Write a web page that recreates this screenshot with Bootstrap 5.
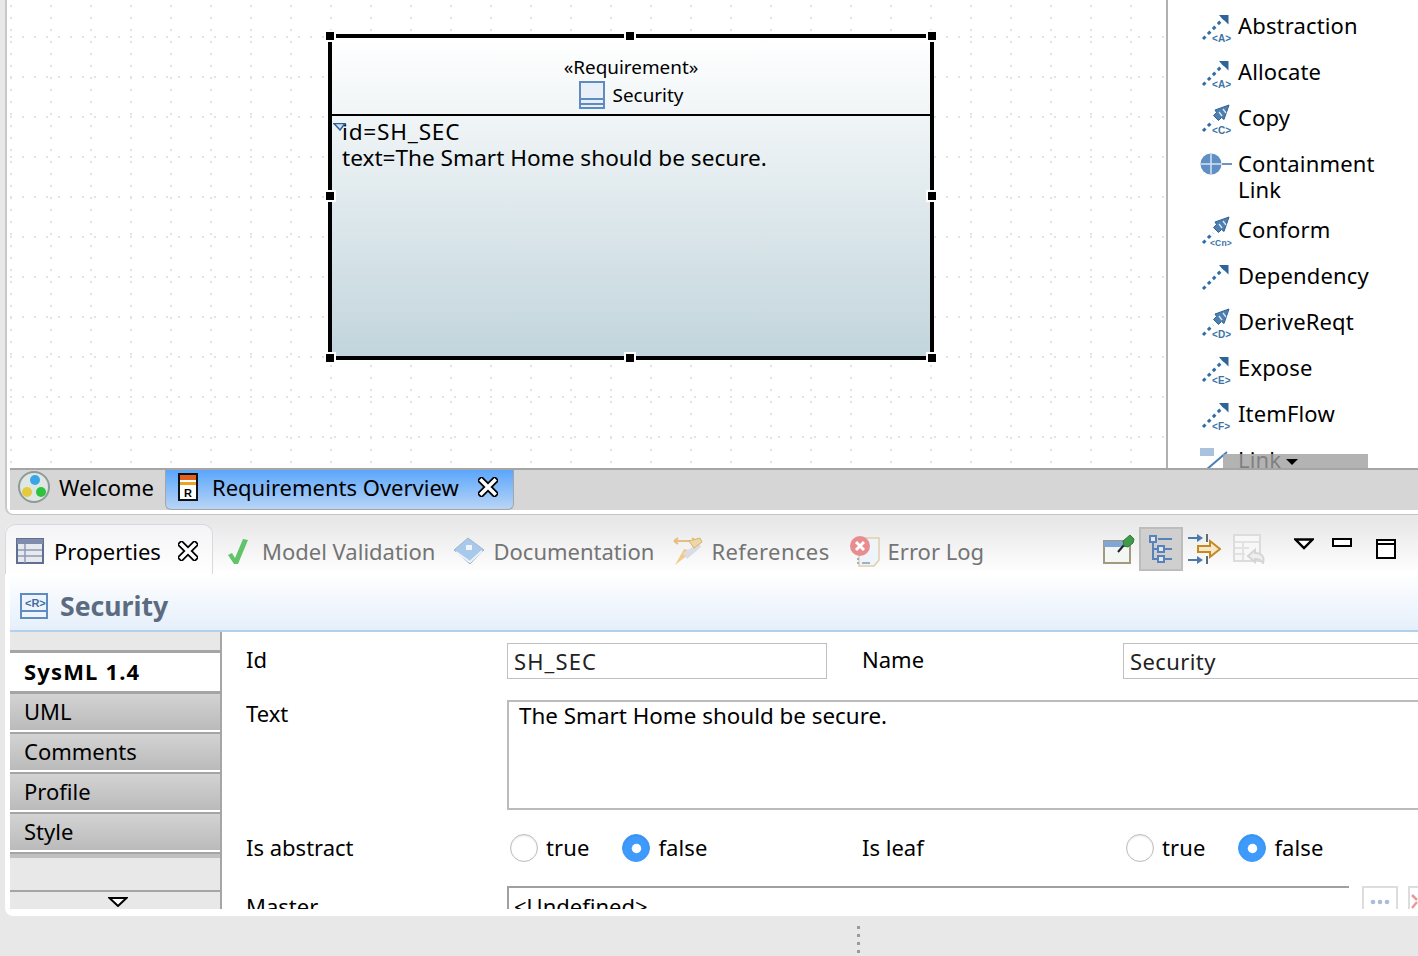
<!DOCTYPE html>
<html lang="en">
<head>
  <meta charset="UTF-8" />
  <title>Requirements Overview</title>
  <link rel="stylesheet" href="https://cdn.jsdelivr.net/npm/bootstrap@5.3.2/dist/css/bootstrap.min.css"/>
  <style>
    html, body { height: 100%; }
    body { width: 1418px; height: 956px; overflow: hidden; background: #e8e8e8; color: #000;
      font-family: "Noto Sans", "DejaVu Sans", sans-serif; font-size: 22px; line-height: 26px; }
    svg { display: block; flex: none; }
    .icon-tag { font-family: "Liberation Sans", sans-serif; font-weight: 700; font-size: 10px; fill: #3c72a8; }
    .icon-tag-sm { font-size: 8.500px; }

    /* editor area */
    .editor-wrap { height: 515px; margin-left: 5px; background: #fff; border-left: 2px solid #c8c8c8; border-bottom: 1px solid #c4c4c4; border-bottom-left-radius: 8px; padding-left: 3px; }
    .editor-top { height: 468px; }
    .diagram { width: 1156px; position: relative; background-color: #fff;
      background-image: radial-gradient(circle at 1px 1px, #e2e2e2 1px, transparent 1.3px), radial-gradient(circle at 1px 1px, #e2e2e2 1px, transparent 1.3px);
      background-size: 40px 12px, 12px 40px; background-position: 0 5px, 0 36px; }
    .palette { width: 252px; position: relative; overflow: hidden; border-left: 2px solid #b0b0b0; padding: 2px 0 0 32px; letter-spacing: .15px; }
    .pal-row { display: flex; gap: 6px; padding: 10px 0; }
    .pal-row svg { margin-top: 0; margin-bottom: -6px; overflow: visible; }
    .pal-tall { margin-bottom: -6px; }
    .pal-more { position: absolute; left: 55px; top: 454px; width: 145px; height: 14px; background: rgba(160,160,160,.8); }
    .pal-more i { position: absolute; left: 63px; top: 5px; border: 6px solid transparent; border-top: 6px solid #000; border-bottom: 0; }

    .req-node { position: absolute; left: 318px; top: 34px; width: 606px; height: 326px; border: 4px solid #000;
      background: linear-gradient(#fff, #c2d5dc); }
    .req-head { height: 78px; border-bottom: 2px solid #000; text-align: center; font-size: 18.9px; line-height: 28px; padding-top: 15px; }
    .req-name { display: flex; justify-content: center; align-items: center; gap: 8px; }
    .req-body { padding: 3px 0 0 10px; font-size: 22.6px; position: relative; }
    .req-body svg { position: absolute; left: 1px; top: 7px; }
    .wide-id { letter-spacing: .8px; }
    .handle { position: absolute; width: 12px; height: 12px; background: #000; border: 2px solid #fff; }

    .editor-tabs { height: 42px; background: #d6d6d6; border-top: 2px solid #a5a5a5; }
    .editor-tabs-fill { height: 40px; padding-bottom: 6px; }
    .welcome-tab { width: 155px; padding-left: 8px; gap: 9px; }
    .overview-tab { width: 349px; height: 40px; padding: 0 0 6px 12px; gap: 14px; background: linear-gradient(#5aa6fb, #b9d5f6); border: 1px solid #a5a5a5; border-top: 0; border-radius: 0 0 6px 6px; }
    .overview-close { margin-left: 5px; }

    /* properties */
    .props { height: 392px; margin: 9px 0 0 5px; background: #fff; border-radius: 8px 0 0 8px; overflow: hidden; }
    .props-tabs { height: 50px; background: linear-gradient(#e9e9e9, #fff); color: #747474; }
    .props-active { width: 208px; height: 50px; background: linear-gradient(#f4f4f6, #fff); border: 1px solid #d8d8e0; border-bottom: 0; border-radius: 10px 10px 0 0; color: #000; padding: 2px 0 0 10px; gap: 10px; }
    .props-close { margin-left: 7px; }
    .tab-dim { gap: 8px; padding-top: 4px; }
    .tab-check-label { margin-left: 6px; }
    .tab-refs { letter-spacing: .4px; }
    .tool-active { width: 44px; height: 44px; background: #cfcfcf; border: 2px solid #bdbdbd; }
    .props-title { height: 58px; margin-left: 5px; background: linear-gradient(#fff, #e5effb); border-bottom: 2px solid #b5d0ee; padding: 8px 0 0 10px; gap: 12px; font-size: 26.6px; font-weight: 700; color: #5b6b80; }
    .props-main { height: 277px; margin-left: 5px; overflow: hidden; }

    .side-tabs { width: 212px; flex: none; height: 277px; border-right: 2px solid #a5a5a5; background: #e8e8e8; }
    .side-blank { height: 21px; border-bottom: 3px solid #a5a5a5; }
    .side-on { height: 41px; background: #fff; border-bottom: 3px solid #a5a5a5; padding: 5px 0 0 14px; font-weight: 700; letter-spacing: 1.15px; }
    .side-off { height: 40px; padding: 0 0 0 14px; line-height: 34px; background: linear-gradient(#d3d3d3, #b9b9b9); border-bottom: 2px solid #a5a5a5; box-shadow: inset 0 -2px 0 #fff; }
    .side-gap { height: 38px; border-top: 4px solid #c0c0c0; border-bottom: 2px solid #a5a5a5; }
    .side-arrow { height: 18px; padding: 5px 0 0 6px; }

    .form-area { padding: 11px 0 0 24px; flex: none; width: 1200px; }
    .form-line { display: grid; grid-template-columns: 261px 355px 261px 1fr; align-items: center; }
    .label-up { padding-bottom: 4px; }
    .field-box { height: 36px; border: 1px solid #c0c0c0; padding: 4px 6px; color: #222; }
    .field-id { width: 320px; letter-spacing: 1.1px; }
    .field-name { letter-spacing: .4px; }
    .text-box { height: 110px; border: 2px solid #bbb; padding: 1px 10px 0; margin-top: 21px; font-size: 22.4px; }
    .text-label { padding-top: 21px; }
    .radio-line { margin-top: 24px; height: 28px; }
    .radio-group { display: flex; align-items: center; gap: 8px; padding-left: 3px; }
    .radio-group .form-check-input { width: 28px; height: 28px; margin: 0; flex: none; border-color: #bbb; box-shadow: inset 0 1px 2px rgba(0,0,0,.1); }
    .radio-group .form-check-input:checked { background-color: #3f9bfb; border-color: #3f9bfb; background-size: 72%; }
    .radio-group label { margin-right: 25px; padding-bottom: 2px; letter-spacing: .1px; }
    .label-tight { padding-bottom: 2px; }
    .master-line { margin-top: 24px; }
    .master-fields { grid-column: 2 / 5; display: flex; }
    .master-box { height: 40px; width: 842px; flex: none; border: 2px solid #a0a0a0; border-right: 0; border-bottom: 0; padding: 5px 5px; }
    .dots-btn { width: 36px; height: 40px; flex: none; border: 2px solid #ddd; margin-left: 13px; padding-top: 10px; }
    .del-btn { width: 36px; height: 40px; flex: none; border: 2px solid #ddd; margin-left: 10px; padding: 5px 0 0 1px; }
    .grip { height: 40px; padding: 10px 0 0 857px; }
    .grip i { display: block; width: 3px; height: 3px; background: #9a9a9a; margin-bottom: 5px; }
  </style>
</head>
<body>
  <svg width="0" height="0" class="position-absolute">
    <defs>
      <symbol id="rel" viewBox="0 0 32 32">
        <path d="M3 27 23 7" stroke="#2f6ea8" stroke-width="3" stroke-dasharray="3.500 3.500" fill="none"/>
        <path d="M19 3h9.500v9.500l-3-3-3.500-3z" fill="#2f6499"/>
      </symbol>
      <symbol id="rocket" viewBox="0 0 32 32">
        <path d="M3 27 13 17" stroke="#2f6ea8" stroke-width="3" stroke-dasharray="3.500 3.500" fill="none"/>
        <path d="M29 1 15 6l1.500 2.500-3 3 5 5 3-3 2.500 2z" fill="#4f7fae" stroke="#2f6499" stroke-width="1"/>
        <path d="M19 8l3 4M23 5l3 4" stroke="#dce8f3" stroke-width="1.300"/>
      </symbol>
      <symbol id="closex" viewBox="0 0 20 20">
        <path d="M3.500 3.500 16.500 16.500M16.500 3.500 3.500 16.500" stroke="#000" stroke-width="7" stroke-linecap="square"/>
        <path d="M3.500 3.500 16.500 16.500M16.500 3.500 3.500 16.500" stroke="#fff" stroke-width="3.500" stroke-linecap="square"/>
      </symbol>
    </defs>
  </svg>

  <div class="editor-wrap">
    <div class="editor-top d-flex">
      <div class="diagram">
        <div class="req-node">
          <div class="req-head">
            <div>«Requirement»</div>
            <div class="req-name">
              <svg width="26" height="28" viewBox="0 0 26 28"><rect x="1" y="1" width="24" height="26" fill="#e9eff7" stroke="#5e8cc0" stroke-width="2"/><path d="M2 18h22M2 23h22" stroke="#5e8cc0" stroke-width="2"/></svg>
              <span>Security</span>
            </div>
          </div>
          <div class="req-body">
            <svg width="13" height="8" viewBox="0 0 13 8"><path d="M0 .5h13M1 .5 7 7l5-6.500" fill="#cfe0f2" stroke="#2f5f9a" stroke-width="1.500"/></svg>
            <div class="wide-id">id=SH_SEC</div>
            <div>text=The Smart Home should be secure.</div>
          </div>
        </div>
        <span class="handle" style="left:314px;top:30px"></span>
        <span class="handle" style="left:614px;top:30px"></span>
        <span class="handle" style="left:916px;top:30px"></span>
        <span class="handle" style="left:314px;top:190px"></span>
        <span class="handle" style="left:916px;top:190px"></span>
        <span class="handle" style="left:314px;top:352px"></span>
        <span class="handle" style="left:614px;top:352px"></span>
        <span class="handle" style="left:916px;top:352px"></span>
      </div>

      <div class="palette">
        <div class="pal-row">
          <svg width="32" height="32" viewBox="0 0 32 32"><use href="#rel"/><text class="icon-tag" x="12" y="30">&lt;A&gt;</text></svg>
          <span>Abstraction</span>
        </div>
        <div class="pal-row">
          <svg width="32" height="32" viewBox="0 0 32 32"><use href="#rel"/><text class="icon-tag" x="12" y="30">&lt;A&gt;</text></svg>
          <span>Allocate</span>
        </div>
        <div class="pal-row">
          <svg width="32" height="32" viewBox="0 0 32 32"><use href="#rocket"/><text class="icon-tag" x="12" y="30">&lt;C&gt;</text></svg>
          <span>Copy</span>
        </div>
        <div class="pal-row pal-tall">
          <svg width="32" height="32" viewBox="0 0 32 32"><circle cx="11" cy="14" r="10.500" fill="#5f8fc4"/><path d="M1 14h21M11 4v20" stroke="#d8e4f2" stroke-width="1.500"/><path d="M22 14h10" stroke="#3c72a8" stroke-width="1.500"/></svg>
          <span>Containment<br/>Link</span>
        </div>
        <div class="pal-row">
          <svg width="32" height="32" viewBox="0 0 32 32"><use href="#rocket"/><text class="icon-tag icon-tag-sm" x="10" y="30">&lt;Cn&gt;</text></svg>
          <span>Conform</span>
        </div>
        <div class="pal-row">
          <svg width="32" height="32" viewBox="0 0 32 32"><use href="#rel"/></svg>
          <span>Dependency</span>
        </div>
        <div class="pal-row">
          <svg width="32" height="32" viewBox="0 0 32 32"><use href="#rocket"/><text class="icon-tag" x="12" y="30">&lt;D&gt;</text></svg>
          <span>DeriveReqt</span>
        </div>
        <div class="pal-row">
          <svg width="32" height="32" viewBox="0 0 32 32"><use href="#rel"/><text class="icon-tag" x="12" y="30">&lt;E&gt;</text></svg>
          <span>Expose</span>
        </div>
        <div class="pal-row">
          <svg width="32" height="32" viewBox="0 0 32 32"><use href="#rel"/><text class="icon-tag" x="12" y="30">&lt;F&gt;</text></svg>
          <span>ItemFlow</span>
        </div>
        <div class="pal-row">
          <svg width="32" height="32" viewBox="0 0 32 32"><rect y="2" width="14" height="8" fill="#a9c3de"/><path d="M6 24 27 6" stroke="#4a7fb5" stroke-width="2"/></svg>
          <span>Link</span>
        </div>
        <div class="pal-more"><i></i></div>
      </div>
    </div>

    <div class="editor-tabs d-flex align-items-start">
      <div class="welcome-tab d-flex align-items-center editor-tabs-fill">
        <svg width="32" height="32" viewBox="0 0 32 32"><circle cx="16" cy="16" r="15" fill="#dfe7e4" stroke="#8d9a96" stroke-width="2"/><circle cx="17" cy="9" r="5" fill="#3aa6e8"/><circle cx="9" cy="21" r="5" fill="#e6c93c"/><circle cx="23" cy="21" r="5" fill="#2fc23d"/></svg>
        <span>Welcome</span>
      </div>
      <div class="overview-tab d-flex align-items-center">
        <svg width="20" height="28" viewBox="0 0 20 28"><rect x="1" y="1" width="18" height="26" fill="#fff" stroke="#111" stroke-width="2"/><rect x="2" y="2" width="16" height="5" fill="#e2601d"/><rect x="2" y="9" width="16" height="3" fill="#e9a325"/><text x="6" y="24" font-size="11" font-weight="700" font-family="Liberation Sans">R</text></svg>
        <span>Requirements Overview</span>
        <svg class="overview-close" width="20" height="20"><use href="#closex"/></svg>
      </div>
    </div>
  </div>

  <div class="props">
    <div class="props-tabs d-flex align-items-center">
      <div class="props-active d-flex align-items-center">
        <svg width="28" height="26" viewBox="0 0 28 26"><rect x="1" y="1" width="26" height="24" fill="#e7e9ef" stroke="#5f6f91" stroke-width="2"/><rect x="1" y="1" width="26" height="5" fill="#7f8cab"/><path d="M2 12h24M2 18h24M9 6v19" stroke="#8f9bb5" stroke-width="1.500"/></svg>
        <span>Properties</span>
        <svg class="props-close" width="20" height="20"><use href="#closex"/></svg>
      </div>
      <div class="tab-dim d-flex align-items-center" style="margin-left:14px">
        <svg width="21" height="27" viewBox="0 0 21 27"><path d="M1 17l4-2 3 5L16 1l5 1-10 24H7z" fill="#62c46a"/></svg>
        <span class="tab-check-label">Model Validation</span>
      </div>
      <div class="tab-dim d-flex align-items-center" style="margin-left:18px">
        <svg width="32" height="28" viewBox="0 0 32 28"><path d="M1 13 15 1l16 12-14 14z" fill="#a9c9ea" stroke="#9fb5cc"/><path d="M3 15l14 10 12-11" stroke="#eef3f9" stroke-width="2" fill="none"/><rect x="13" y="8" width="6" height="5" fill="#eef5fc"/></svg>
        <span>Documentation</span>
      </div>
      <div class="tab-dim d-flex align-items-center" style="margin-left:17px">
        <svg width="32" height="32" viewBox="0 0 32 32"><path d="M3 6h22M3 6l4-3M3 6l4 3M25 6l-4-3M25 6l-4 3" stroke="#e6bd80" stroke-width="2" fill="none"/><path d="M4 30 13 14l9 2z" fill="#f0cc8c"/><path d="M12 18 28 8l2 4-14 12z" fill="#d9dde3"/><path d="M18 6l11-3 2 4-8 6z" fill="#eed7a6" stroke="#d9b26a"/></svg>
        <span class="tab-refs">References</span>
      </div>
      <div class="tab-dim d-flex align-items-center" style="margin-left:20px">
        <svg width="30" height="32" viewBox="0 0 30 32"><path d="M9 3h20v22l-5 6H9z" fill="#eef4f9" stroke="#e0cfa8" stroke-width="1.500"/><circle cx="10" cy="11" r="10" fill="#e98c8f"/><path d="M6 7l8 8M14 7l-8 8" stroke="#fff" stroke-width="3"/><path d="M7 24h2M7 28h2M12 28h8" stroke="#9bb3c9" stroke-width="2"/></svg>
        <span>Error Log</span>
      </div>

      <div class="d-flex align-items-center ms-auto">
        <svg width="32" height="30" viewBox="0 0 32 30"><rect x="1" y="7" width="26" height="22" fill="#f3f6f3" stroke="#a29a7e" stroke-width="2"/><rect x="1" y="7" width="26" height="6" fill="#7fa6d4"/><path d="M15 18l6-7" stroke="#222" stroke-width="2"/><path d="M20 7l7-6 4 4-1 4-5 4-4-1z" fill="#3f9a4a" stroke="#2f7a3a"/></svg>
        <div class="tool-active d-flex align-items-center justify-content-center ms-1">
          <svg width="24" height="28" viewBox="0 0 24 28"><path d="M4 5v20M4 14h8M4 24h8M9 4h14M16 14h7M16 24h7" stroke="#5b82b8" stroke-width="2"/><rect x="1" y="1" width="6" height="6" fill="#dfe7f2" stroke="#5b82b8" stroke-width="2"/><rect x="9" y="11" width="6" height="6" fill="#dfe7f2" stroke="#5b82b8" stroke-width="2"/><rect x="9" y="21" width="6" height="6" fill="#dfe7f2" stroke="#5b82b8" stroke-width="2"/></svg>
        </div>
        <svg class="ms-1" width="34" height="32" viewBox="0 0 34 32"><path d="M1 5h12M1 27h12" stroke="#4b7aa8" stroke-width="2"/><path d="M10 1l6 4-6 4zM10 23l6 4-6 4z" fill="#4b7aa8"/><path d="M20 1v8M20 23v8" stroke="#5b6b78" stroke-width="2"/><path d="M11 13h12V8l10 8-10 8v-5H11z" fill="#f6e7c8" stroke="#c48a22" stroke-width="2"/></svg>
        <svg style="margin-left:12px" width="32" height="30" viewBox="0 0 32 30"><rect x="1" y="1" width="26" height="26" fill="#f7f7f7" stroke="#dcdcdc" stroke-width="2"/><path d="M2 8h24M2 14h14M2 20h10M10 8v18" stroke="#e2e2e2" stroke-width="2"/><path d="M30 29c2-7-2-10-8-10v-3l-7 6 7 6v-3c4 0 6 1 8 4z" fill="#efefef" stroke="#d5d5d5" stroke-width="2"/></svg>
        <svg style="margin-left:29px;margin-bottom:10px" width="20" height="12" viewBox="0 0 20 12"><path d="M1.500 1.500h17L10 10z" fill="#fff" stroke="#000" stroke-width="2.400"/></svg>
        <svg style="margin-left:18px;margin-bottom:12px" width="20" height="10" viewBox="0 0 20 10"><rect x="1" y="1" width="18" height="7" fill="#fff" stroke="#000" stroke-width="2"/></svg>
        <svg style="margin-left:24px;margin-right:22px" width="20" height="20" viewBox="0 0 20 20"><rect x="1" y="1" width="18" height="18" fill="#fff" stroke="#000" stroke-width="2"/><path d="M1 5h18" stroke="#000" stroke-width="2"/></svg>
      </div>
    </div>

    <div class="props-title d-flex align-items-center">
      <svg width="28" height="26" viewBox="0 0 28 26"><rect x="1" y="1" width="26" height="24" fill="#eef4fb" stroke="#5e8cc0" stroke-width="2"/><path d="M2 18h24" stroke="#5e8cc0" stroke-width="2"/><text x="5" y="14" font-size="11" font-weight="700" fill="#3f6ea3" font-family="Liberation Sans">&lt;R&gt;</text></svg>
      <span>Security</span>
    </div>

    <div class="props-main d-flex">
      <div class="side-tabs">
        <div class="side-blank"></div>
        <div class="side-on">SysML 1.4</div>
        <div class="side-off">UML</div>
        <div class="side-off">Comments</div>
        <div class="side-off">Profile</div>
        <div class="side-off">Style</div>
        <div class="side-gap"></div>
        <div class="side-arrow d-flex justify-content-center">
          <svg width="20" height="10" viewBox="0 0 20 10"><path d="M1.500 1h17L10 9z" fill="#fff" stroke="#000" stroke-width="2"/></svg>
        </div>
      </div>

      <div class="form-area">
        <div class="form-line">
          <div class="label-up">Id</div>
          <div><div class="field-box field-id">SH_SEC</div></div>
          <div class="label-up">Name</div>
          <div class="field-box field-name">Security</div>
        </div>
        <div class="form-line align-items-start">
          <div class="text-label">Text</div>
          <div class="text-box" style="grid-column: 2 / 5">The Smart Home should be secure.</div>
        </div>
        <div class="form-line radio-line">
          <div class="label-tight">Is abstract</div>
          <div class="radio-group">
            <input class="form-check-input" type="radio" name="abstract" id="abT"/><label for="abT">true</label>
            <input class="form-check-input" type="radio" name="abstract" id="abF" checked/><label for="abF">false</label>
          </div>
          <div class="label-tight">Is leaf</div>
          <div class="radio-group">
            <input class="form-check-input" type="radio" name="leaf" id="lfT"/><label for="lfT">true</label>
            <input class="form-check-input" type="radio" name="leaf" id="lfF" checked/><label for="lfF">false</label>
          </div>
        </div>
        <div class="form-line master-line">
          <div>Master</div>
          <div class="master-fields">
            <div class="master-box">&lt;Undefined&gt;</div>
            <div class="dots-btn d-flex justify-content-center">
              <svg width="24" height="8" viewBox="0 0 24 8"><circle cx="5" cy="4" r="2.300" fill="#a9bcdc"/><circle cx="12" cy="4" r="2.300" fill="#a9bcdc"/><circle cx="19" cy="4" r="2.300" fill="#a9bcdc"/></svg>
            </div>
            <div class="del-btn">
              <svg width="8" height="18" viewBox="0 0 8 18"><path d="M1 2l5 5M6 9l-5 6" stroke="#e89a9a" stroke-width="2.500"/></svg>
            </div>
          </div>
        </div>
      </div>
    </div>
  </div>

  <div class="grip"><i></i><i></i><i></i><i></i></div>

  <script src="https://cdn.jsdelivr.net/npm/bootstrap@5.3.2/dist/js/bootstrap.bundle.min.js"></script>
</body>
</html>
